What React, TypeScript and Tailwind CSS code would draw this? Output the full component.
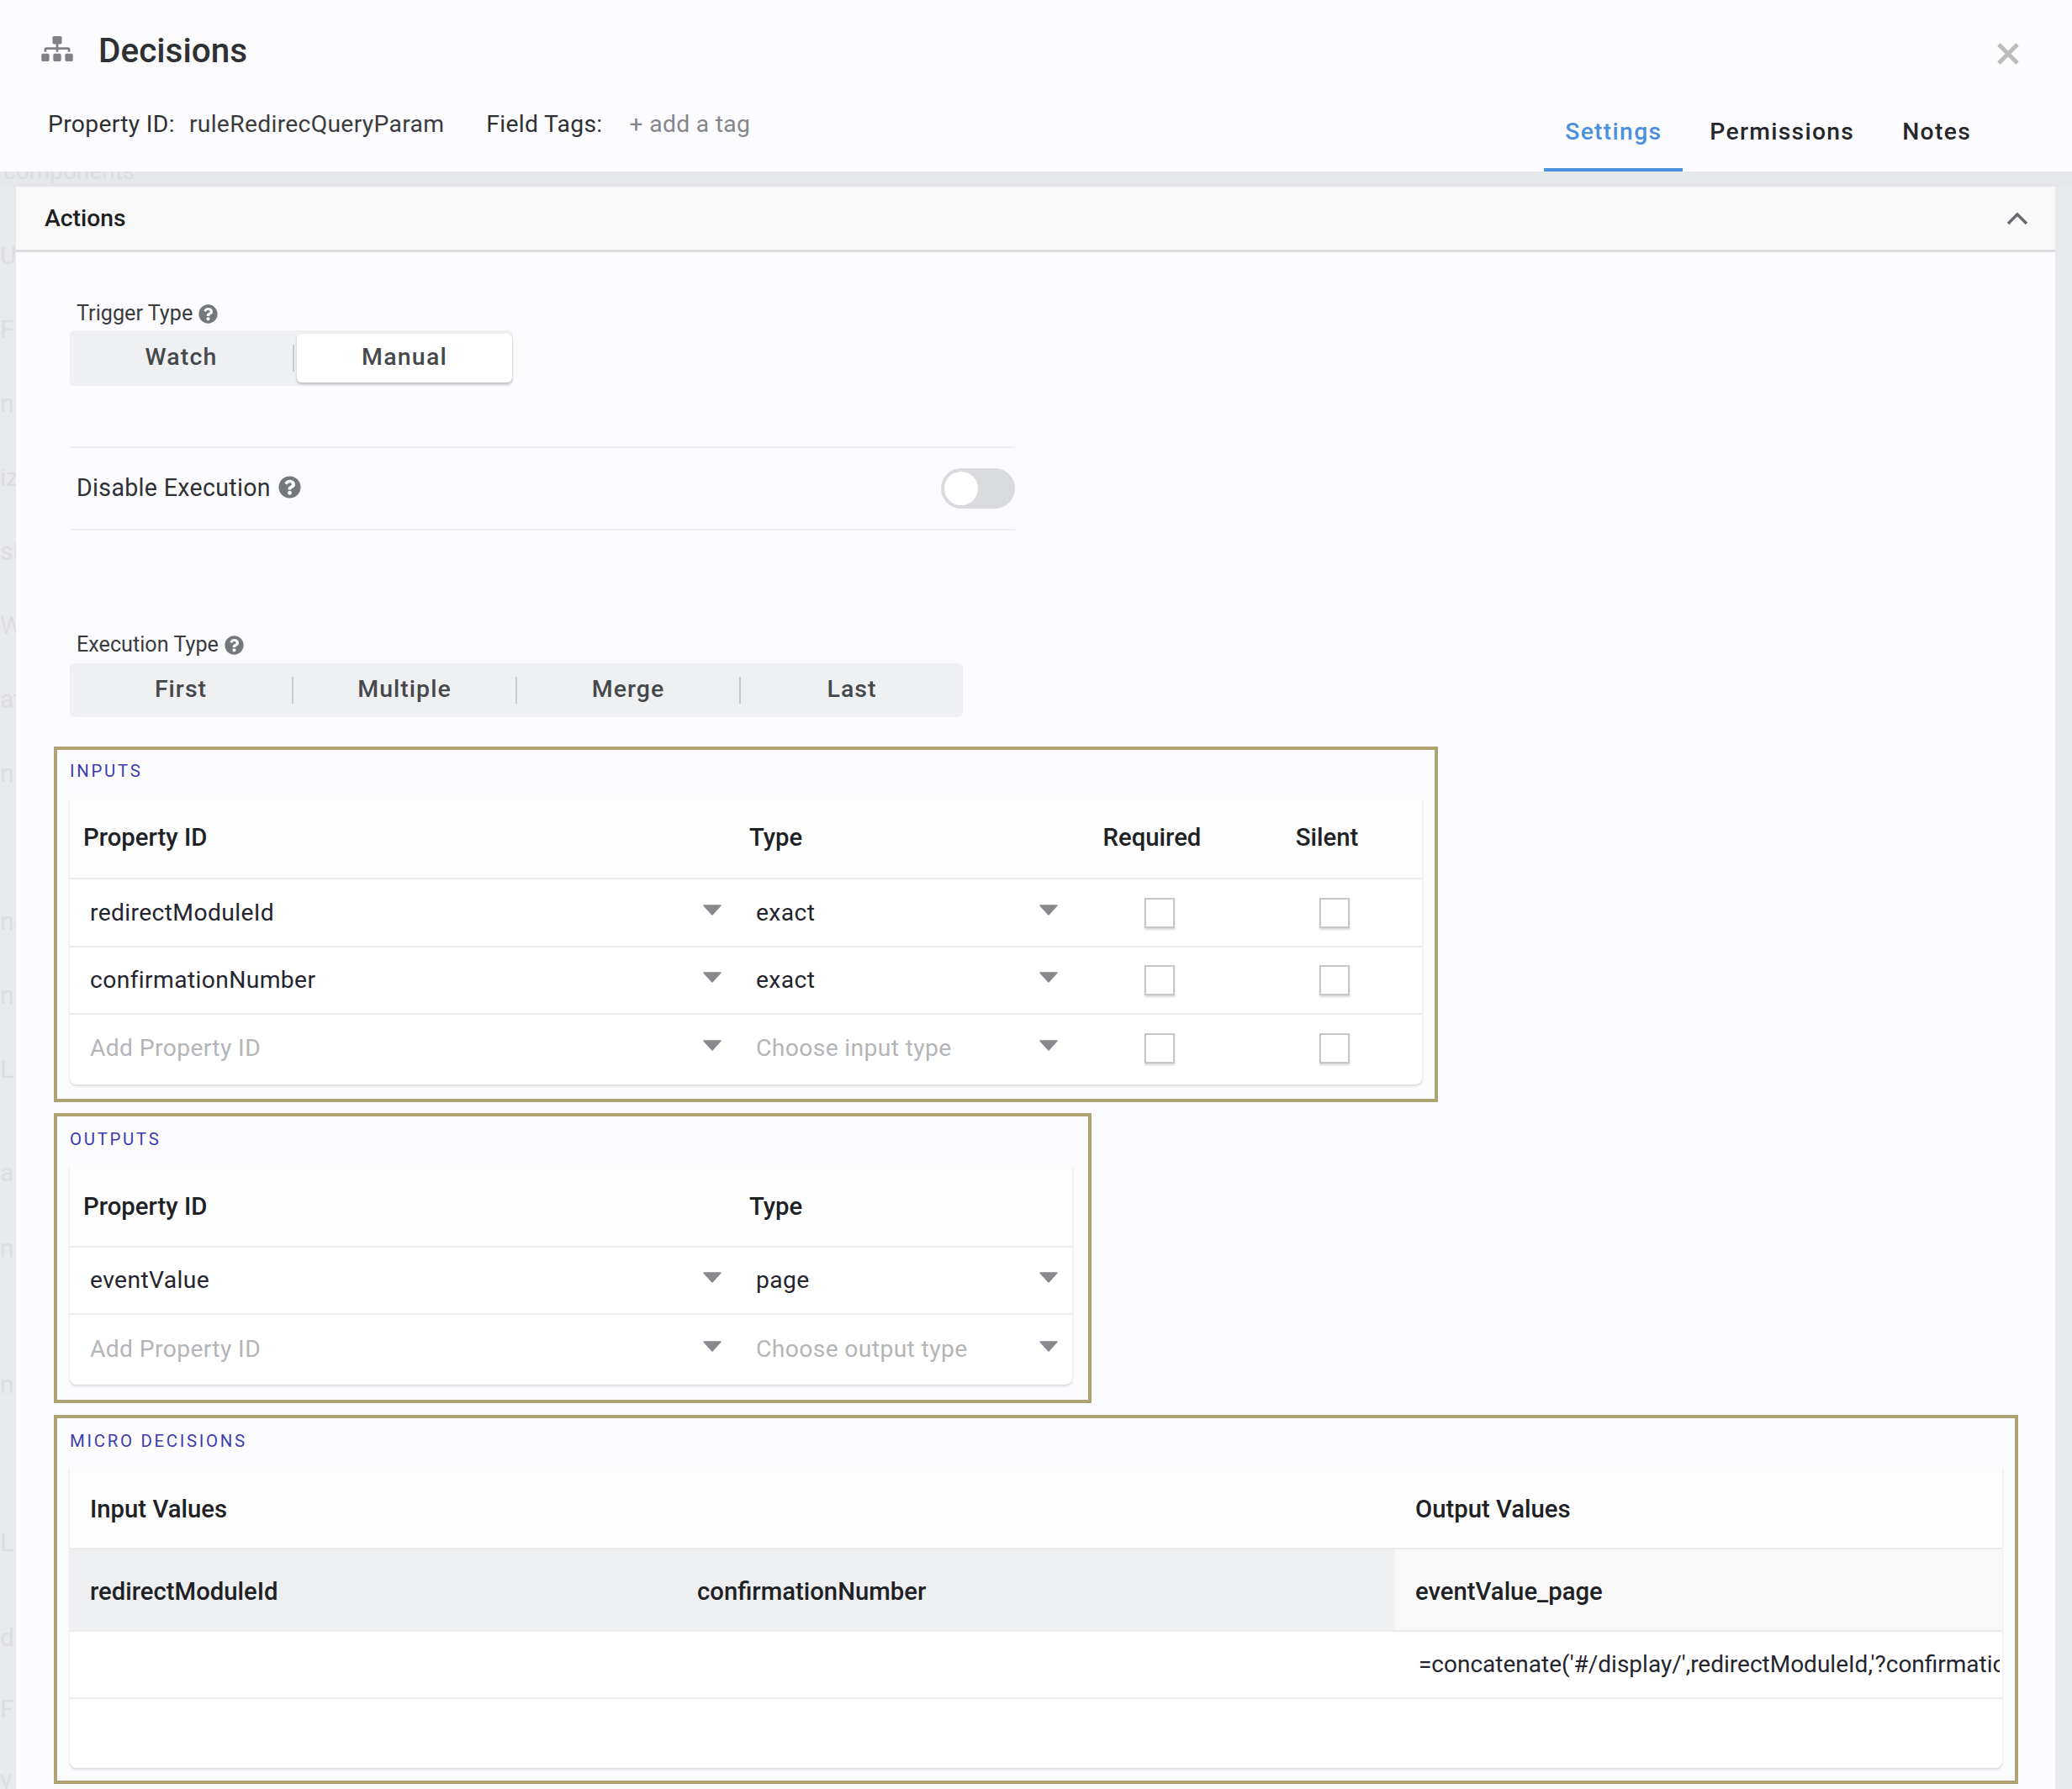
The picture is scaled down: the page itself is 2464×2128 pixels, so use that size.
import React from 'react';
import { FaQuestionCircle, FaSitemap } from 'react-icons/fa';

const ghostWords = ['Us', 'Fie', 'n', 'iz', 'si', 'W', 'at', 'n', '', 'nn', 'n', 'L'];

function Caret() {
  return (
    <svg width="24" height="13" viewBox="0 0 24 13" className="shrink-0 mb-[7px]">
      <path d="M2 1h20l-10 11z" fill="#88888e" stroke="#88888e" strokeWidth="1.5" strokeLinejoin="round" />
    </svg>
  );
}

function Check() {
  return <div className="w-[36px] h-[36px] bg-white border-2 border-[#c6c6c8] shadow-[0_2px_2px_rgba(0,0,0,0.15)]" />;
}

function SelectCell({ value, placeholder, width, pad }: { value: string; placeholder?: boolean; width: string; pad: string }) {
  return (
    <div className={`${width} ${pad} pr-[8px] h-full flex items-center justify-between shrink-0`}>
      <span className={`pt-[1px] text-[28.3px] tracking-[0.35px] ${placeholder ? 'text-[#b4b5b8]' : 'text-[#24252e]'}`}>{value}</span>
      <Caret />
    </div>
  );
}

function Segmented({ items, width }: { items: string[]; width: string }) {
  return (
    <div className={`${width} h-[64px] flex items-center rounded-[6px] bg-[#eff0f2]`}>
      {items.map((item, i) => (
        <React.Fragment key={item}>
          {i > 0 && <div className="w-[2px] h-[32px] bg-[#c8cacd] shrink-0" />}
          <div className="flex-1 pb-[1px] text-center text-[28.5px] font-medium tracking-[1px] text-[#46484c]">{item}</div>
        </React.Fragment>
      ))}
    </div>
  );
}

function HeadCell({ children, className }: { children?: React.ReactNode; className?: string }) {
  return <div className={`text-[29.3px] font-medium text-[#202124] shrink-0 ${className}`}>{children}</div>;
}

function SectionBox({ label, className, labelPad, children }: { label: string; className: string; labelPad: string; children: React.ReactNode }) {
  return (
    <div className={`border-[4px] border-[#b0a272] ${className}`}>
      <div className={`h-[58px] ${labelPad} leading-[22px] text-[20.4px] tracking-[2.7px] text-[#3c3cb0]`}>{label}</div>
      {children}
    </div>
  );
}

function InputRow({ name, type, placeholder, className }: { name: string; type: string; placeholder?: boolean; className: string }) {
  return (
    <div className={`flex items-center ${className}`}>
      <SelectCell value={name} placeholder={placeholder} width="w-[784px]" pad="pl-[24px]" />
      <SelectCell value={type} placeholder={placeholder} width="w-[400px]" pad="pl-[32px]" />
      <div className="w-[224px] flex justify-center shrink-0"><Check /></div>
      <div className="w-[192px] flex justify-center shrink-0"><Check /></div>
    </div>
  );
}

export default function App() {
  return (
    <div className="w-[2464px] h-[2128px] overflow-hidden flex flex-col bg-[#fcfcfe] font-['Roboto',sans-serif]">
      {/* Header */}
      <div className="h-[204px] shrink-0 flex justify-between">
        <div>
          <div className="flex items-center pl-[49px] pt-[34px] h-[86px]">
            <FaSitemap className="w-[38px] h-[30px] mb-[4px] text-[#808286]" />
            <span className="ml-[30px] text-[40.5px] leading-[34px] font-medium text-[#2f3034]">Decisions</span>
          </div>
          <div className="flex items-center pl-[57px] mt-[41px] text-[28.3px] tracking-[0.3px] text-[#2f3034]">
            <span>Property ID:</span>
            <span className="ml-[17px] text-[#3b3c40]">ruleRedirecQueryParam</span>
            <span className="ml-[50px]">Field Tags:</span>
            <span className="ml-[32px] text-[#85868a]">+ add a tag</span>
          </div>
        </div>
        <div className="flex flex-col items-end pr-[62px]">
          <svg width="28" height="28" viewBox="0 0 28 28" className="mt-[50px]">
            <path d="M3 3l22 22M25 3L3 25" stroke="#bcbcbc" strokeWidth="5" strokeLinecap="butt" />
          </svg>
          <div className="mt-auto mr-[55px] flex items-end h-[100px] text-[28.3px] font-medium tracking-[1.3px]">
            <div className="h-full w-[165px] flex items-center justify-center pt-[10px] border-b-[4px] border-[#4a8fe0] text-[#4a8fe0]">Settings</div>
            <div className="h-full ml-[32px] flex items-center pt-[10px] pb-[4px] text-[#26272b]">Permissions</div>
            <div className="h-full ml-[57px] flex items-center pt-[10px] pb-[4px] mr-[3px] text-[#26272b]">Notes</div>
          </div>
        </div>
      </div>

      <div className="h-[18px] shrink-0 overflow-hidden bg-[#e5e7ea] text-[28px] leading-[36px] text-[#dcdde2]">
        <div className="-mt-[18px] pl-[4px]">components</div>
      </div>

      <div className="flex-1 flex min-h-0 bg-[#e8e9ed]">
        <div className="w-[19px] shrink-0 overflow-hidden pt-[38px] text-[30px] leading-[88px] text-[#dcdde2]">
          {ghostWords.map((w, i) => (
            <div key={i} className="h-[88px] whitespace-nowrap">{w}</div>
          ))}
          <div className="h-[35px]" />
          <div className="h-[90px]">a</div>
          <div className="h-[90px]">n</div>
          <div className="h-[72px]" />
          <div className="h-[88px]">n</div>
          <div className="h-[100px]" />
          <div className="h-[88px]">L</div>
          <div className="h-[25px]" />
          <div className="h-[85px]">d</div>
          <div className="h-[84px] whitespace-nowrap">Fi</div>
          <div className="h-[84px]">y</div>
        </div>

        {/* Card */}
        <div className="w-[2425px] shrink-0 bg-[#fcfcfe]">
          <div className="h-[78px] flex items-center justify-between pl-[34px] pr-[32px] bg-[#f8f8f9] rounded-t-[4px] border-b-[3px] border-[#dcdee0]">
            <span className="pt-[2px] text-[28.3px] font-medium text-[#1e1f23]">Actions</span>
            <svg width="26" height="16" viewBox="0 0 26 16">
              <path d="M2 14L13 3l11 11" fill="none" stroke="#666a6e" strokeWidth="3.5" />
            </svg>
          </div>

          <div className="pl-[45px] pt-[58px]">
            <div className="h-[30px] pl-[27px] flex items-center gap-[7px] text-[25.2px] text-[#3a3b3f]">
              Trigger Type <FaQuestionCircle className="w-[23px] h-[23px] text-[#74787c]" />
            </div>
            <div className="ml-[19px] mt-[5px] w-[527px] h-[65px] flex items-center rounded-[6px] bg-[#eff0f2] shadow-[0_1px_1px_rgba(0,0,0,0.06)]">
              <div className="w-[265px] text-center text-[28.5px] font-medium tracking-[1.2px] text-[#46484c]">Watch</div>
              <div className="w-[2px] h-[32px] bg-[#c8cacd]" />
              <div className="ml-[3px] w-[256px] h-[58px] flex items-center justify-center rounded-[6px] bg-white text-[28.5px] font-medium tracking-[1.2px] text-[#46484c] shadow-[0_2px_3px_rgba(0,0,0,0.22)]">Manual</div>
            </div>

            <div className="ml-[19px] mt-[73px] w-[1124px] h-[100px] pl-[8px] flex items-center justify-between border-y-2 border-[#eff0f2]">
              <div className="flex items-center gap-[9px] pb-[2px] text-[28.6px] tracking-[0.3px] text-[#303136]">
                Disable Execution <FaQuestionCircle className="w-[27px] h-[27px] text-[#74787c]" />
              </div>
              <div className="w-[88px] h-[48px] rounded-full bg-[#d8dade] p-[4px]">
                <div className="w-[40px] h-[40px] rounded-full bg-white" />
              </div>
            </div>

            <div className="mt-[121px] h-[30px] pl-[27px] flex items-center gap-[7px] text-[25.2px] text-[#3a3b3f]">
              Execution Type <FaQuestionCircle className="w-[23px] h-[23px] text-[#74787c]" />
            </div>
            <div className="ml-[19px] mt-[7px]">
              <Segmented items={['First', 'Multiple', 'Merge', 'Last']} width="w-[1062px]" />
            </div>

            {/* Inputs */}
            <SectionBox label="INPUTS" labelPad="pt-[14px]" className="mt-[35px] w-[1646px] h-[423px] px-[15px]">
              <div className="bg-white rounded-b-[8px] shadow-[0_2px_3px_rgba(0,0,0,0.14)]">
                <div className="h-[96px] flex items-center bg-[#fdfdfe] border-b-[2px] border-[#ebecee]">
                  <HeadCell className="w-[784px] pl-[16px]">Property ID</HeadCell>
                  <HeadCell className="w-[400px] pl-[24px]">Type</HeadCell>
                  <HeadCell className="w-[224px] pr-[18px] text-center">Required</HeadCell>
                  <HeadCell className="w-[192px] pr-[18px] text-center">Silent</HeadCell>
                </div>
                <InputRow name="redirectModuleId" type="exact" className="h-[81px] border-b-[2px] border-[#ebecee]" />
                <InputRow name="confirmationNumber" type="exact" className="h-[80px] border-b-[2px] border-[#ebecee]" />
                <InputRow name="Add Property ID" type="Choose input type" placeholder className="h-[83px] pb-[3px]" />
              </div>
            </SectionBox>

            {/* Outputs */}
            <SectionBox label="OUTPUTS" labelPad="pt-[16px]" className="mt-[13px] w-[1234px] h-[345px] pl-[15px] pr-[19px]">
              <div className="bg-white rounded-b-[8px] shadow-[0_2px_3px_rgba(0,0,0,0.14)]">
                <div className="h-[98px] pt-[3px] flex items-center bg-[#fdfdfe] border-b-[2px] border-[#ebecee]">
                  <HeadCell className="w-[784px] pl-[16px]">Property ID</HeadCell>
                  <HeadCell className="w-[400px] pl-[24px]">Type</HeadCell>
                </div>
                <div className="h-[80px] flex items-center border-b-[2px] border-[#ebecee]">
                  <SelectCell value="eventValue" width="w-[784px]" pad="pl-[24px]" />
                  <SelectCell value="page" width="w-[400px]" pad="pl-[32px]" />
                </div>
                <div className="h-[83px] pb-[1px] flex items-center">
                  <SelectCell value="Add Property ID" placeholder width="w-[784px]" pad="pl-[24px]" />
                  <SelectCell value="Choose output type" placeholder width="w-[400px]" pad="pl-[32px]" />
                </div>
              </div>
            </SectionBox>

            {/* Micro decisions */}
            <SectionBox label="MICRO DECISIONS" labelPad="pt-[16px]" className="mt-[14px] w-[2336px] h-[439px] px-[15px]">
              <div className="bg-white rounded-b-[8px] shadow-[0_2px_3px_rgba(0,0,0,0.14)]">
                <div className="h-[98px] pt-[5px] flex items-center bg-[#fdfdfe] border-b-[2px] border-[#ebecee]">
                  <HeadCell className="w-[1600px] pl-[24px]">Input Values</HeadCell>
                  <HeadCell className="pl-0">Output Values</HeadCell>
                </div>
                <div className="h-[98px] flex border-b-[2px] border-[#ebecee] text-[29.3px] font-medium text-[#202124]">
                  <div className="w-[746px] pl-[24px] pt-[5px] flex items-center bg-[#eeeff1]">redirectModuleId</div>
                  <div className="w-[830px] pt-[5px] flex items-center bg-[#eeeff1]">confirmationNumber</div>
                  <div className="flex-1 pl-[24px] pt-[5px] flex items-center bg-[#f8f8f9]">eventValue_page</div>
                </div>
                <div className="h-[80px] flex items-center justify-end border-b-[2px] border-[#ebecee]">
                  <div className="w-[691px] mr-[3px] overflow-hidden whitespace-nowrap text-[28px] text-[#24252e]">
                    =concatenate('#/display/',redirectModuleId,'?confirmationNumber=',confirmationNumber)
                  </div>
                </div>
                <div className="h-[82px]" />
              </div>
            </SectionBox>
          </div>
        </div>

        <div className="w-[20px] shrink-0 bg-[#e8e9ed]" />
      </div>
    </div>
  );
}
